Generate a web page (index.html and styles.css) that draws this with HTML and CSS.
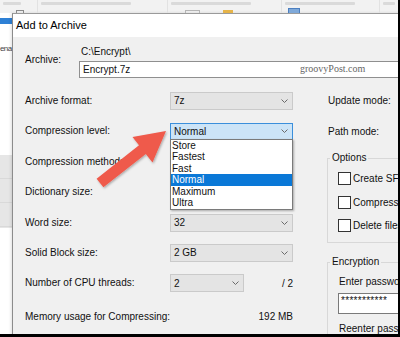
FILE: index.html
```html
<!DOCTYPE html>
<html>
<head>
<meta charset="utf-8">
<title>Add to Archive</title>
<link rel="stylesheet" href="styles.css">
</head>
<body>
<div class="screen">
  <div class="ribbon">
    <div class="seg seg1"><span class="blur w18"></span><span class="ico ico-x"></span></div>
    <div class="seg seg2"><span class="blur w90"></span></div>
    <div class="seg seg3"><span class="blur w80"></span><span class="ico ico-out"></span><span class="ico ico-folder"></span></div>
    <div class="seg seg4"><span class="blur w70"></span><span class="ico ico-blue"></span></div>
    <div class="seg seg5"><span class="blur w12"></span></div>
  </div>
  <div class="main">
    <div class="side">
      <div class="sel-bar"></div>
      <div class="side-text">ena</div>
      <div class="side-rows"><div class="srow"></div><div class="srow"></div><div class="srow"></div></div>
    </div>
    <div class="dialog">
      <div class="titlebar">Add to Archive</div>
      <div class="body">
        <div class="archive">
          <div class="archive-label">Archive:</div>
          <div class="archive-path">C:\Encrypt\</div>
          <div class="textbox archive-input">Encrypt.7z</div>
        </div>
        <div class="cols">
          <div class="left">
            <div class="lbl">Archive format:</div>
            <div class="combo"><span>7z</span><svg class="chev" viewBox="0 0 7 4"><path d="M0.5 0.5 L3.5 3.5 L6.5 0.5"/></svg></div>

            <div class="lbl">Compression level:</div>
            <div class="combo focus open"><span>Normal</span><svg class="chev" viewBox="0 0 7 4"><path d="M0.5 0.5 L3.5 3.5 L6.5 0.5"/></svg>
              <ul class="list">
                <li>Store</li>
                <li>Fastest</li>
                <li>Fast</li>
                <li class="hl">Normal</li>
                <li>Maximum</li>
                <li>Ultra</li>
              </ul>
            </div>

            <div class="lbl">Compression method:</div>
            <div class="combo"><span></span></div>

            <div class="lbl">Dictionary size:</div>
            <div class="combo"><span></span></div>

            <div class="lbl">Word size:</div>
            <div class="combo"><span>32</span><svg class="chev" viewBox="0 0 7 4"><path d="M0.5 0.5 L3.5 3.5 L6.5 0.5"/></svg></div>

            <div class="lbl">Solid Block size:</div>
            <div class="combo"><span>2 GB</span><svg class="chev" viewBox="0 0 7 4"><path d="M0.5 0.5 L3.5 3.5 L6.5 0.5"/></svg></div>

            <div class="lbl">Number of CPU threads:</div>
            <div class="cpu">
              <div class="combo short"><span>2</span><svg class="chev" viewBox="0 0 7 4"><path d="M0.5 0.5 L3.5 3.5 L6.5 0.5"/></svg></div>
              <span class="val">/ 2</span>
            </div>

            <div class="lbl mem">Memory usage for Compressing:</div>
            <div class="val mem">192 MB</div>
          </div>
          <div class="right">
            <div class="rrow">Update mode:</div>
            <div class="rrow">Path mode:</div>
            <div class="group options">
              <div class="group-title">Options</div>
              <div class="chk"><span class="box"></span>Create SFX archive</div>
              <div class="chk"><span class="box"></span>Compress shared files</div>
              <div class="chk"><span class="box"></span>Delete files after compression</div>
            </div>
            <div class="group enc">
              <div class="group-title">Encryption</div>
              <div class="enc-text">Enter password:</div>
              <div class="textbox pw">***********</div>
              <div class="enc-text re">Reenter password:</div>
            </div>
          </div>
        </div>
      </div>
    </div>
  </div>
  <div class="watermark">groovyPost.com</div>
  <svg class="arrow" viewBox="0 0 400 337" width="400" height="337">
    <defs>
      <filter id="sh" x="-20%" y="-20%" width="140%" height="140%">
        <feDropShadow dx="1" dy="1.2" stdDeviation="1" flood-color="#000" flood-opacity="0.3"/>
      </filter>
    </defs>
    <polygon filter="url(#sh)" fill="#ef5a4b" points="166,131 152.5,162.5 145.8,153.9 103.4,187.3 96.6,178.7 139,145.3 132.5,137"/>
  </svg>
</div>
</body>
</html>
```
FILE: styles.css
```css
* { box-sizing: border-box; }
html, body { margin: 0; padding: 0; }
body {
  background: #fff;
  font-family: "Liberation Sans", Arial, sans-serif;
  font-size: 10px;
  color: #111;
}
.screen {
  position: relative;
  width: 400px;
  height: 337px;
  border-right: 2px solid #000;
  border-bottom: 3px solid #000;
  overflow: hidden;
  background: #fff;
}

/* background explorer ribbon */
.ribbon {
  display: flex;
  height: 13px;
  background: #f2f2f2;
}
.seg {
  position: relative;
  display: flex;
  align-items: flex-end;
  border-right: 1px solid #e2e2e2;
  overflow: hidden;
}
.seg1 { width: 38px; }
.seg2 { width: 130px; }
.seg3 { width: 114px; }
.seg4 { width: 98px; }
.seg5 { flex: 1; border-right: none; }
.blur {
  position: absolute;
  top: 2px;
  left: 3px;
  height: 3px;
  background: #dadada;
  border-radius: 1px;
}
.w18 { width: 18px; }
.w90 { width: 90px; }
.w80 { width: 80px; }
.w70 { width: 70px; }
.w12 { width: 12px; }
.ico { display: block; height: 4px; }
.ico-x { width: 8px; margin-left: 16px; border-top: 1px solid #8a8a8a; border-left: 1px solid #8a8a8a; border-right: 1px solid #8a8a8a; height: 3px; }
.ico-out { width: 15px; height: 3px; margin-left: 17px; border: 1px solid #b5b5b5; border-bottom: none; }
.ico-folder { width: 10px; height: 3px; margin-left: 23px; background: #e6b449; }
.ico-blue { width: 12px; height: 5px; margin-left: 6px; background: #7fa9d9; border: 1px solid #4c7fc0; border-bottom: none; }

.main {
  display: flex;
}
.side {
  width: 12px;
  flex: none;
  overflow: hidden;
  background: #fff;
}
.sel-bar {
  height: 6px;
  margin-top: 5px;
  background: #2e80d5;
}
.side-text {
  margin-top: 20px;
  font-size: 8px;
  line-height: 10px;
  letter-spacing: -0.6px;
  color: #444;
  white-space: nowrap;
}
.side-rows {
  margin-top: 101px;
  height: 73px;
  background: #e6e6e6;
}
.srow { height: 24px; border-bottom: 1px solid #d9d9d9; }

/* dialog */
.dialog {
  width: 430px;
  flex: none;
  border-left: 1px solid #8c8c8c;
  border-top: 1px solid #9a9a9a;
  box-shadow: -1px 0 3px rgba(0,0,0,0.12);
  background: #f0f0f0;
}
.titlebar {
  height: 23px;
  line-height: 23px;
  padding-left: 3px;
  font-size: 11px;
  background: #fff;
  color: #000;
}
.body {
  padding-left: 12px;
  height: 320px;
}
.archive {
  display: grid;
  grid-template-columns: 54px 1fr;
  grid-template-rows: 12px 17px;
  row-gap: 3px;
  padding-top: 9px;
}
.archive-label {
  grid-row: 1 / 3;
  align-self: center;
  margin-bottom: 4px;
  line-height: 12px;
}
.archive-path {
  line-height: 12px;
  padding-left: 2px;
}
.textbox {
  background: #fff;
  border: 1px solid #8f8f8f;
  padding-left: 3px;
  white-space: nowrap;
}
.archive-input {
  width: 340px;
  height: 17px;
  line-height: 15px;
}

.cols {
  display: flex;
  margin-top: 7.8px;
}
.left {
  display: grid;
  grid-template-columns: 145px 123px;
  grid-auto-rows: 30.4px;
  align-items: center;
  flex: none;
}
.lbl { white-space: nowrap; line-height: 12px; }
.combo {
  position: relative;
  display: flex;
  align-items: center;
  justify-content: space-between;
  height: 18px;
  padding: 0 4px 0 3px;
  background: #e4e4e4;
  border: 1px solid #cacaca;
  white-space: nowrap;
}
.chev {
  width: 7px;
  height: 4px;
  fill: none;
  stroke: #6a6a6a;
  stroke-width: 1;
}
.combo.focus {
  height: 17px;
  background: #cce4f7;
  border-color: #3b8fdb;
}
.list {
  position: absolute;
  left: -1px;
  right: -1px;
  top: 15px;
  margin: 0;
  padding: 0;
  list-style: none;
  background: #fff;
  border: 1px solid #7a7a7a;
  box-shadow: 1px 1px 2px rgba(0,0,0,0.3);
  z-index: 5;
}
.list li {
  height: 11.5px;
  line-height: 11.5px;
  padding-left: 1px;
  color: #111;
}
.list li.hl {
  background: #0a78d7;
  color: #fff;
}
.cpu {
  display: flex;
  align-items: center;
  justify-content: space-between;
}
.combo.short { width: 74px; }
.val { text-align: right; white-space: nowrap; }
.mem { margin-top: 6px; }

.right {
  margin-left: 34px;
  flex: 1;
  min-width: 0;
  white-space: nowrap;
}
.rrow {
  height: 30.4px;
  display: flex;
  align-items: center;
  padding-left: 1px;
}
.group {
  border: 1px solid #d8d8d8;
  border-right: none;
  padding: 0 0 4.5px 10px;
}
.options { margin-top: 11.4px; }
.group-title {
  width: max-content;
  margin: -7px 0 3px -8px;
  padding: 0 2px;
  line-height: 12px;
  background: #f0f0f0;
}
.chk {
  height: 23.5px;
  display: flex;
  align-items: center;
  gap: 2px;
}
.box {
  width: 13px;
  height: 13px;
  flex: none;
  background: #fff;
  border: 1px solid #333;
}
.enc {
  margin-top: 19px;
  border-bottom: none;
  padding-bottom: 20px;
}
.enc .group-title { margin-bottom: 0; }
.enc-text {
  line-height: 12px;
  margin-top: 8px;
  padding-left: 1px;
}
.enc-text.re { margin-top: 9px; }
.pw {
  height: 21px;
  margin-top: 5px;
  line-height: 14px;
  padding-left: 2px;
  border-color: #7a7a7a;
  letter-spacing: 0.3px;
}

.watermark {
  position: absolute;
  left: 300px;
  top: 62px;
  font-family: "Liberation Serif", "Times New Roman", serif;
  font-size: 10px;
  line-height: 13px;
  color: #666;
}
.arrow {
  position: absolute;
  left: 0;
  top: 0;
  z-index: 10;
  pointer-events: none;
}
```
